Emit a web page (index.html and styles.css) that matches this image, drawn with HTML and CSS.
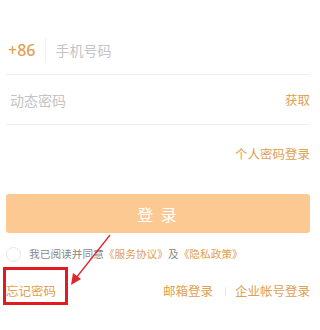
FILE: index.html
```html
<!DOCTYPE html>
<html lang="zh-CN">
<head>
  <meta charset="UTF-8">
  <meta name="viewport" content="width=device-width, initial-scale=1">
  <title>登录</title>
  <link rel="stylesheet" href="styles.css">
</head>
<body>

  <div class="login">
    <div class="field">
      <span class="area-code">+86</span>
      <span class="sep"></span>
      <span class="placeholder">手机号码</span>
    </div>

    <div class="field">
      <span class="placeholder">动态密码</span>
      <span class="get-code">获取</span>
    </div>

    <div class="switch-row">
      <a href="#" class="link">个人密码登录</a>
    </div>

    <button class="login-btn">登 录</button>

    <div class="agree">
      <span class="check"></span>
      <span>我已阅读并同意<a href="#" class="link">《服务协议》</a>及<a href="#" class="link">《隐私政策》</a></span>
    </div>

    <div class="bottom-row">
      <a href="#" class="link forgot">忘记密码</a>
      <div class="other">
        <a href="#" class="link">邮箱登录</a>
        <span class="bar"></span>
        <a href="#" class="link">企业帐号登录</a>
      </div>
    </div>
  </div>

  <!-- annotation -->
  <div class="mark-box"></div>
  <svg class="mark-arrow" width="60" height="60" viewBox="0 0 60 60">
    <line x1="50" y1="3" x2="16" y2="46" stroke="#e0262c" stroke-width="1.3"/>
    <polygon points="11,53 13,41 21,47" fill="#e0262c"/>
  </svg>

</body>
</html>
```

FILE: styles.css
```css
body {
  margin: 0;
  background: #fff;
  font-family: "Noto Sans CJK SC", "Noto Sans", sans-serif;
  color: #999;
}

a {
  text-decoration: none;
}

.login {
  padding: 25px 10px 0 6px;
}

.field {
  display: flex;
  align-items: center;
  height: 49px;
  border-bottom: 1px solid #eeeeee;
}

.area-code {
  color: #e0a052;
  font-family: "Noto Sans", sans-serif;
  font-size: 16px;
  font-weight: 500;
  padding-left: 2px;
}

.sep {
  width: 1px;
  height: 24px;
  background: #efefef;
  margin: 0 9px 0 10px;
}

.placeholder {
  color: #c4c4c4;
  font-size: 14px;
  flex: 1;
}

.field:nth-child(2) .placeholder {
  padding-left: 4px;
}

.get-code {
  color: #e0a052;
  font-size: 12.5px;
}

.link {
  color: #e0a052;
}

.switch-row {
  display: flex;
  justify-content: flex-end;
  margin-top: 20px;
  font-size: 12.5px;
  line-height: 18px;
}

.login-btn {
  display: block;
  width: 100%;
  height: 39px;
  margin-top: 31px;
  border: none;
  border-radius: 3px;
  background: #fcc993;
  color: #fff;
  font-family: inherit;
  font-size: 16px;
  letter-spacing: 2px;
}

.agree {
  display: flex;
  align-items: center;
  margin-top: 13px;
  font-size: 10.7px;
  color: #888;
  line-height: 16px;
}

.check {
  width: 13px;
  height: 13px;
  border: 1px solid #e6e6e6;
  border-radius: 50%;
  margin-right: 8px;
}

.bottom-row {
  display: flex;
  justify-content: space-between;
  align-items: center;
  margin-top: 20px;
  font-size: 12.5px;
  line-height: 18px;
}

.other {
  display: flex;
  align-items: center;
}

.bar {
  width: 1px;
  height: 9px;
  background: #e4e4e4;
  margin: 0 9px 0 12px;
}

/* red annotation over the forgot link */
.mark-box {
  position: absolute;
  left: 3px;
  top: 267px;
  width: 59px;
  height: 32px;
  border: 3px solid #e01b22;
}

.mark-arrow {
  position: absolute;
  left: 60px;
  top: 232px;
}
```
